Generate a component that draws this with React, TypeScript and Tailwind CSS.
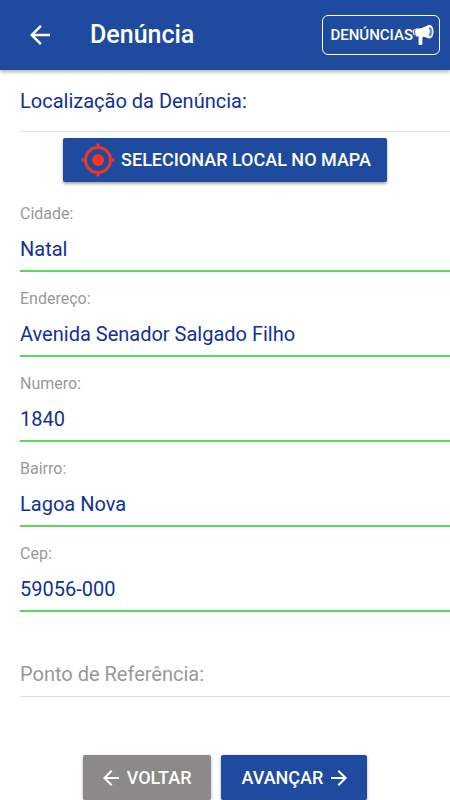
import { ComponentProps } from "react";

const campos = [
  { id: "cidade", label: "Cidade:", valor: "Natal" },
  { id: "endereco", label: "Endereço:", valor: "Avenida Senador Salgado Filho" },
  { id: "numero", label: "Numero:", valor: "1840" },
  { id: "bairro", label: "Bairro:", valor: "Lagoa Nova" },
  { id: "cep", label: "Cep:", valor: "59056-000" },
];

const ArrowIcon = (props: ComponentProps<"svg">) => (
  <svg viewBox="0 0 20 20" fill="currentColor" aria-hidden="true" {...props}>
    <path d="M20 8.8H4.8l7-7L10 0 0 10l10 10 1.8-1.8-7-7H20z" />
  </svg>
);

const LocateIcon = () => (
  <svg viewBox="0 0 34 34" className="size-[34px]" fill="none" aria-hidden="true">
    <circle cx="17" cy="17" r="12.5" stroke="#f03524" strokeWidth="3" />
    <circle cx="17" cy="17" r="6" fill="#f03524" />
    <path d="M17 0.5v4M17 29.5v4M0.5 17h4M29.5 17h4" stroke="#f03524" strokeWidth="3" />
  </svg>
);

const MegaphoneIcon = () => (
  <svg viewBox="0 0 22 22" className="size-[22px]" fill="none" aria-hidden="true">
    <path d="M2.6 4.6C7 4.8 11 3.5 15.5 1v13.4C11 12.200 7 11.800 3 12.500 1.900 10 1.900 7 2.600 4.600z" fill="#fff" />
    <path d="M1.600 5.600C.2 6.400.1 9.600 1.400 10.800" stroke="#fff" strokeWidth="1.200" />
    <path d="M5.500 11.500h5c-.2 1.500-1 1.900-1.200 3.200l.1 5.300c0 1.200-3.600 1.500-3.800.2z" fill="#fff" />
    <ellipse cx="16.400" cy="7.700" rx="4.200" ry="6.900" fill="#fff" />
    <path d="M17 2.800c1.500.6 2.300 2.600 2.300 4.900s-.8 4.300-2.300 4.900c-.7-.4-1.200-1.200-1.500-2.200 1.700-.8 1.700-4.600 0-5.400.3-1 .8-1.800 1.500-2.200z" fill="#6f8fc9" />
  </svg>
);

const Header = () => (
  <header className="flex h-[70px] items-center bg-[#1e4b9f] pr-[10px] pl-[30px] text-white shadow-[0_2px_4px_rgba(0,0,0,0.3)]">
    <button type="button" aria-label="Voltar">
      <ArrowIcon className="size-5" />
    </button>
    <h1 className="ml-10 flex-1 text-[25px] font-medium">Denúncia</h1>
    <button
      type="button"
      className="flex h-10 items-center rounded-md border border-white pr-1 pl-[7px] text-[15px] font-medium"
    >
      DENÚNCIAS
      <MegaphoneIcon />
    </button>
  </header>
);

const App = () => {
  return (
    <div className="min-h-screen bg-white font-['Roboto',sans-serif]">
      <Header />
      <form>
        <h2 className="ml-5 h-[62px] border-b border-[#dedede] text-xl leading-[62px] text-[#0f3198]">
          Localização da Denúncia:
        </h2>
        <div className="mt-[6px] flex justify-center">
          <button
            type="button"
            className="flex h-11 items-center gap-[6px] rounded-xs bg-[#1e4b9f] pr-4 pl-[18px] text-lg font-medium text-white shadow-[0_2px_3px_rgba(0,0,0,0.35)]"
          >
            <LocateIcon />
            SELECIONAR LOCAL NO MAPA
          </button>
        </div>
        <div className="mt-[5px] ml-5">
          {campos.map(({ id, label, valor }) => (
            <div key={id} className="flex h-[85px] flex-col border-b-2 border-[#57d85d] pt-[17px]">
              <label htmlFor={id} className="text-base leading-5 text-[#999999]">
                {label}
              </label>
              <input
                id={id}
                defaultValue={valor}
                className="mt-[11px] h-7 w-full text-xl text-[#0f3198] outline-none"
              />
            </div>
          ))}
          <div className="mt-12 border-b border-[#dedede] pb-2">
            <input
              aria-label="Ponto de Referência"
              placeholder="Ponto de Referência:"
              className="block h-7 w-full text-xl outline-none placeholder:text-[#999999]"
            />
          </div>
        </div>
        <div className="mt-[58px] flex justify-center gap-[10px] text-lg font-medium text-white">
          <button
            type="button"
            className="flex h-[45px] items-center gap-2 rounded-xs bg-[#8b8a88] px-5 shadow-[0_1px_3px_rgba(0,0,0,0.35)]"
          >
            <ArrowIcon className="size-4" />
            VOLTAR
          </button>
          <button
            type="submit"
            className="flex h-[45px] items-center gap-2 rounded-xs bg-[#1e4b9f] px-5 shadow-[0_1px_3px_rgba(0,0,0,0.35)]"
          >
            AVANÇAR
            <ArrowIcon className="size-4 rotate-180" />
          </button>
        </div>
      </form>
    </div>
  );
};

export default App;
